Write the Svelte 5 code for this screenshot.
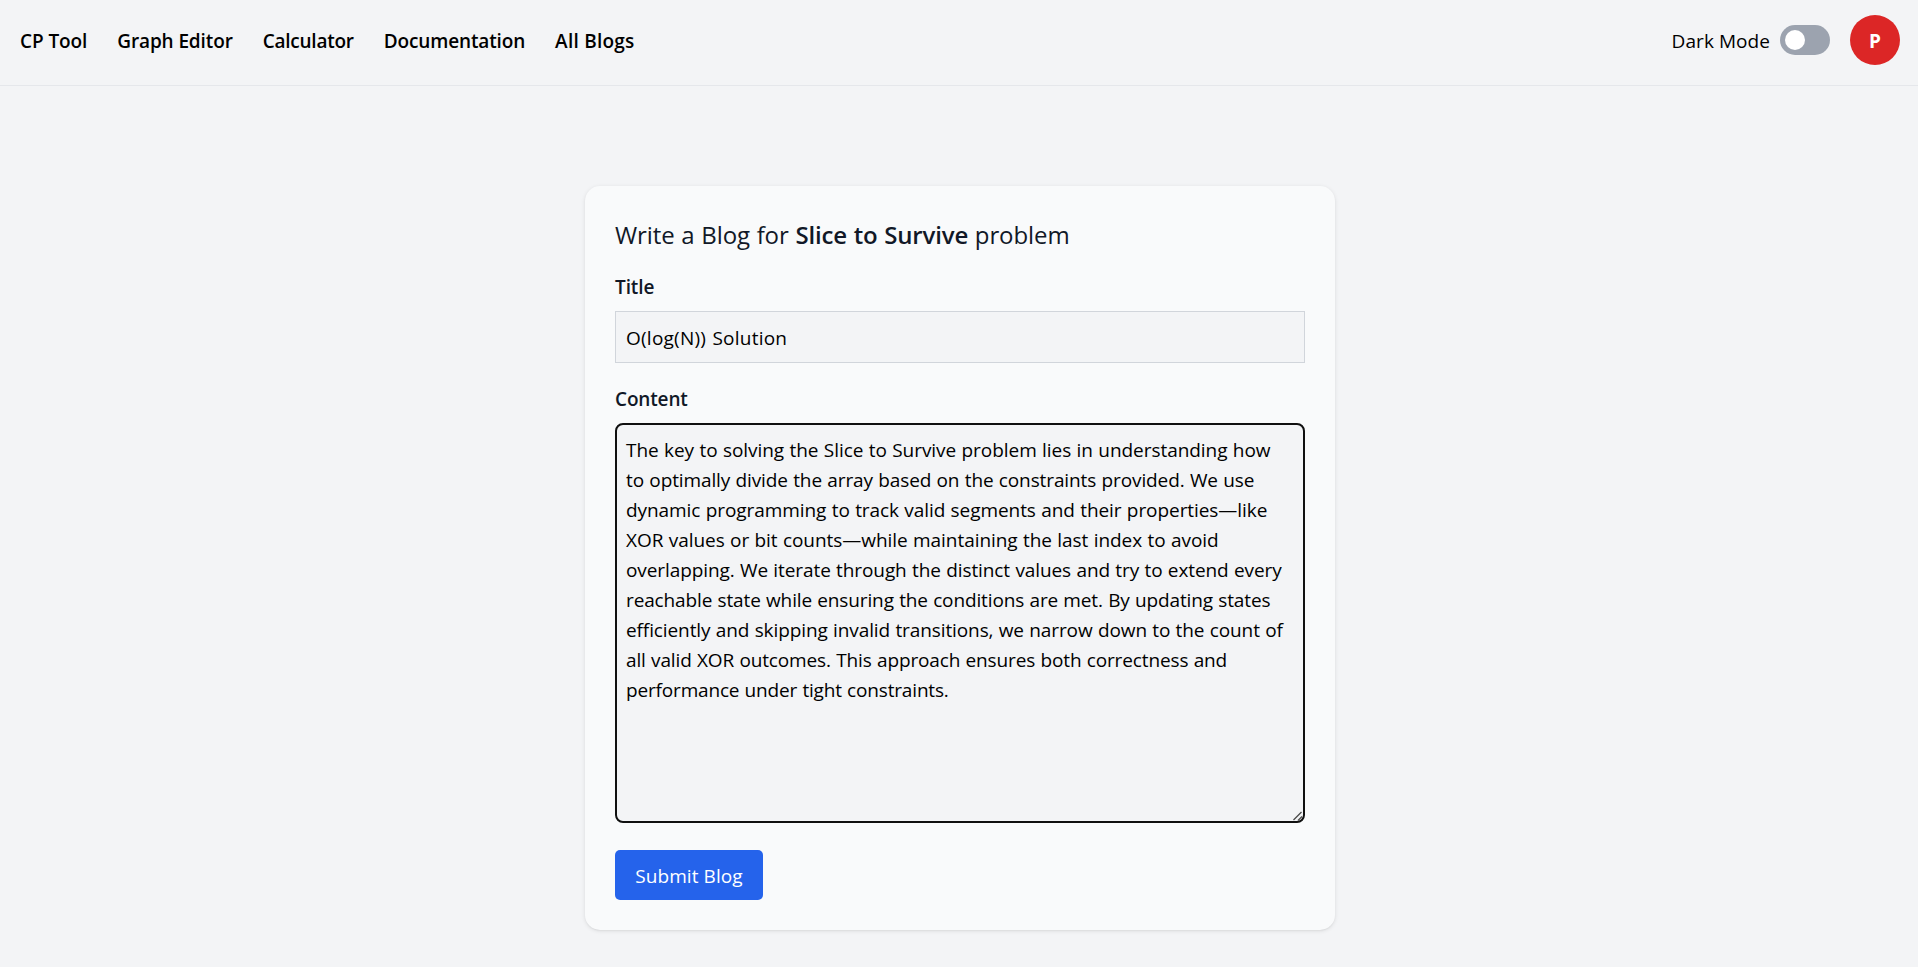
<script>
  const links = [
    { label: 'CP Tool', spacing: -0.09 },
    { label: 'Graph Editor', spacing: -0.12 },
    { label: 'Calculator', spacing: -0.25 },
    { label: 'Documentation', spacing: -0.14 },
    { label: 'All Blogs', spacing: 0.24 }
  ];

  const lines = [
    { text: 'The key to solving the Slice to Survive problem lies in understanding how', spacing: -0.05 },
    { text: 'to optimally divide the array based on the constraints provided. We use', spacing: -0.11 },
    { text: 'dynamic programming to track valid segments and their properties—like', spacing: -0.07 },
    { text: 'XOR values or bit counts—while maintaining the last index to avoid', spacing: -0.05 },
    { text: 'overlapping. We iterate through the distinct values and try to extend every', spacing: -0.09 },
    { text: 'reachable state while ensuring the conditions are met. By updating states', spacing: -0.13 },
    { text: 'efficiently and skipping invalid transitions, we narrow down to the count of', spacing: -0.1 },
    { text: 'all valid XOR outcomes. This approach ensures both correctness and', spacing: -0.13 },
    { text: 'performance under tight constraints.', spacing: -0.17 }
  ];

  let title = $state('O(log(N)) Solution');
  let dark = $state(false);
</script>

<div class="page">
  <header>
    <nav>
      {#each links as link}
        <a href="#top" style:letter-spacing="{link.spacing}px">{link.label}</a>
      {/each}
    </nav>
    <div class="actions">
      <span class="mode">Dark Mode</span>
      <button class="toggle" class:on={dark} aria-label="Dark Mode" onclick={() => (dark = !dark)}>
        <span class="knob"></span>
      </button>
      <div class="avatar"><span>P</span></div>
    </div>
  </header>

  <main>
    <section class="card">
      <h1>Write a Blog for <strong>Slice to Survive</strong> problem</h1>
      <label for="title">Title</label>
      <input id="title" bind:value={title} />
      <span class="label content" id="content-label">Content</span>
      <div class="field">
        <div class="editor" role="textbox" tabindex="0" aria-multiline="true" aria-labelledby="content-label" contenteditable="true">
          {#each lines as line}
            <div class="line" style:letter-spacing="{line.spacing}px">{line.text}</div>
          {/each}
        </div>
        <svg class="grip" width="12" height="12" viewBox="0 0 12 12" aria-hidden="true">
          <path d="M1.5 10 9.5 2M6 10.5 10 6.5" fill="none" stroke="#4b4b4b" stroke-width="1.3" />
        </svg>
      </div>
      <button class="submit">Submit Blog</button>
    </section>
  </main>
</div>

<style>
  :global(body) {
    background: #f3f4f6;
  }
  .page,
  .page * {
    box-sizing: border-box;
  }
  .page {
    height: 967px;
    overflow: hidden;
    background: #f3f4f6;
    color: #000;
    font: 400 19px/30px "Open Sans", "Noto Sans", sans-serif;
  }
  header {
    display: flex;
    align-items: flex-start;
    justify-content: space-between;
    height: 86px;
    padding: 15px 18px 0 20px;
    border-bottom: 1px solid #e5e7eb;
  }
  nav {
    display: flex;
    gap: 30px;
    padding-top: 11px;
  }
  nav a {
    color: #000;
    font-weight: 600;
    text-decoration: none;
  }
  .actions {
    display: flex;
    align-items: center;
    height: 50px;
  }
  .mode {
    padding-top: 2px;
    margin-right: 10px;
    letter-spacing: 0.06px;
  }
  button {
    border: 0;
    font: inherit;
    cursor: pointer;
  }
  .toggle {
    display: flex;
    width: 50px;
    height: 30px;
    padding: 5px;
    margin-right: 20px;
    border-radius: 15px;
    background: #9ca3af;
  }
  .toggle.on {
    justify-content: flex-end;
    background: #2563eb;
  }
  .knob {
    width: 20px;
    height: 20px;
    border-radius: 50%;
    background: #fff;
  }
  .avatar {
    display: grid;
    place-items: center;
    width: 50px;
    height: 50px;
    border-radius: 50%;
    background: #dc2626;
    color: #fff;
    font-weight: 700;
  }
  .avatar span {
    padding-top: 2px;
  }
  main {
    display: flex;
    justify-content: center;
    padding: 100px 0 0 2px;
  }
  .card {
    display: flex;
    flex-direction: column;
    width: 750px;
    height: 744px;
    padding: 30px;
    border-radius: 15px;
    background: #f9fafb;
    color: #111827;
    box-shadow: 0 1px 4px rgba(0, 0, 0, 0.1), 0 1px 2px -1px rgba(0, 0, 0, 0.1);
  }
  h1 {
    margin: 0;
    height: 55px;
    font-size: 24px;
    line-height: 38px;
    font-weight: 400;
    white-space: nowrap;
    letter-spacing: -0.1px;
    word-spacing: 0.6px;
  }
  h1 strong {
    font-weight: 600;
    letter-spacing: -0.15px;
  }
  label,
  .label {
    height: 40px;
    padding-top: 1px;
    font-weight: 600;
    letter-spacing: -0.1px;
  }
  input {
    height: 52px;
    padding: 2px 10px 0;
    border: 1px solid #d1d5db;
    border-radius: 0;
    outline: 0;
    background: #f3f4f6;
    color: #000;
    font: inherit;
    letter-spacing: 0.24px;
    word-spacing: 1px;
  }
  .content {
    margin-top: 20px;
    letter-spacing: -0.15px;
  }
  .field {
    position: relative;
    height: 400px;
  }
  .editor {
    height: 100%;
    padding: 10px 8px 8px 9px;
    border: 2px solid #101010;
    border-radius: 8px;
    outline: 0;
    overflow: auto;
    background: #f3f4f6;
    color: #000;
    word-spacing: 0.5px;
  }
  .grip {
    position: absolute;
    right: 1px;
    bottom: 1px;
    pointer-events: none;
  }
  .line {
    white-space: nowrap;
  }
  .submit {
    align-self: flex-start;
    flex: none;
    width: 148px;
    height: 50px;
    margin-top: 27px;
    padding: 1px 0 0;
    border-radius: 5px;
    background: #2563eb;
    color: #fff;
    letter-spacing: 0.08px;
  }
</style>
